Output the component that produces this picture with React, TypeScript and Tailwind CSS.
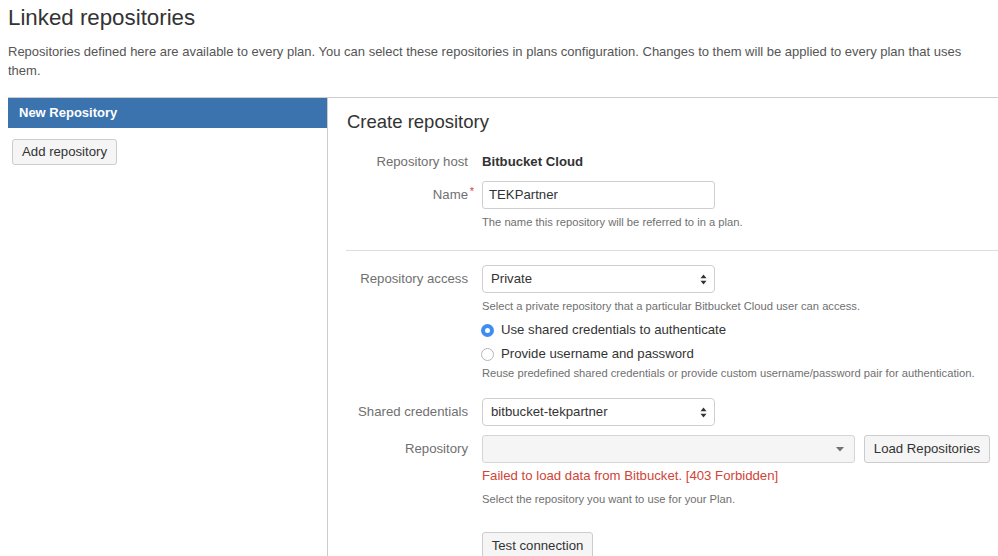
import React from 'react';

const font = { fontFamily: '"Liberation Sans", Arial, sans-serif' };

function Label({ children, required }: { children: React.ReactNode; required?: boolean }) {
  return (
    <div className="w-[122px] shrink-0 text-right text-[13.2px] text-[#707070]">
      <span className="relative">
        {children}
        {required && (
          <span className="absolute -right-[6px] -top-[4px] text-[11px] text-[#d04437]">*</span>
        )}
      </span>
    </div>
  );
}

function SelectArrows() {
  return (
    <svg width="7" height="11" viewBox="0 0 7 11" className="shrink-0">
      <path d="M3.5 0.5 L6.5 4.2 L0.5 4.2 Z" fill="#333" />
      <path d="M3.5 10.5 L6.5 6.8 L0.5 6.8 Z" fill="#333" />
    </svg>
  );
}

function NativeSelect({ value }: { value: string }) {
  return (
    <div className="w-[233px] h-[28px] bg-white border border-[#cfcfcf] rounded-[4px] flex items-center justify-between pl-[8px] pr-[7px] text-[13.2px] text-[#333]">
      <span>{value}</span>
      <SelectArrows />
    </div>
  );
}

function Radio({ checked, label }: { checked?: boolean; label: string }) {
  return (
    <div className="flex items-center h-[20px] text-[13.2px] text-[#333]">
      {checked ? (
        <span className="w-[13px] h-[13px] rounded-full bg-[#3d8ef0] flex items-center justify-center">
          <span className="w-[5px] h-[5px] rounded-full bg-white" />
        </span>
      ) : (
        <span className="w-[13px] h-[13px] rounded-full border border-[#b5b5b5] bg-white" />
      )}
      <span className="ml-[7px]">{label}</span>
    </div>
  );
}

export default function App() {
  return (
    <div className="w-[998px] h-[556px] overflow-hidden bg-white text-[#333] pl-[8px]" style={font}>
      {/* Header */}
      <h1 className="text-[22.3px] leading-[26px] pt-[5px] text-[#333]">Linked repositories</h1>
      <p className="mt-[11px] text-[13px] leading-[19px] text-[#555] pr-[10px]">
        Repositories defined here are available to every plan. You can select these repositories in plans configuration. Changes to them will be applied to every plan that uses them.
      </p>

      <div className="mt-[17px] border-t border-[#cccccc] flex h-[460px]">
        {/* Sidebar */}
        <div className="w-[320px] shrink-0 border-r border-[#cccccc]">
          <div className="h-[30px] bg-[#3b73af] flex items-center pl-[11px] text-[13px] font-bold text-white">
            New Repository
          </div>
          <button className="mt-[11px] ml-[4px] h-[26px] px-[9px] bg-[#f5f5f5] border border-[#cccccc] rounded-[3px] text-[13.2px] text-[#333]">
            Add repository
          </button>
        </div>

        {/* Form */}
        <div className="flex-1 pl-[18px] pt-[12px]">
          <h2 className="text-[18.5px] leading-[24px] pl-[1px] text-[#333]">Create repository</h2>

          <div className="mt-[18px] flex items-center h-[20px] gap-[14px]">
            <Label>Repository host</Label>
            <span className="text-[13.2px] font-bold text-[#333]">Bitbucket Cloud</span>
          </div>

          <div className="mt-[9px] flex items-center gap-[14px]">
            <Label required>Name</Label>
            <div className="w-[233px] h-[28px] bg-white border border-[#cfcfcf] rounded-[3px] flex items-center pl-[6px] text-[13.2px] text-[#333]">
              TEKPartner
            </div>
          </div>
          <div className="mt-[5px] ml-[136px] text-[11.2px] leading-[16px] text-[#707070]">
            The name this repository will be referred to in a plan.
          </div>

          <div className="mt-[20px] border-t border-[#dddddd]" />

          <div className="mt-[14px] flex items-center gap-[14px]">
            <Label>Repository access</Label>
            <NativeSelect value="Private" />
          </div>
          <div className="mt-[5px] ml-[136px] text-[11.2px] leading-[16px] text-[#707070]">
            Select a private repository that a particular Bitbucket Cloud user can access.
          </div>
          <div className="ml-[135px] mt-[6px] flex flex-col gap-[4px]">
            <Radio checked label="Use shared credentials to authenticate" />
            <Radio label="Provide username and password" />
          </div>
          <div className="mt-[1px] ml-[136px] text-[11.2px] leading-[16px] text-[#707070] whitespace-nowrap">
            Reuse predefined shared credentials or provide custom username/password pair for authentication.
          </div>

          <div className="mt-[17px] flex items-center gap-[14px]">
            <Label>Shared credentials</Label>
            <NativeSelect value="bitbucket-tekpartner" />
          </div>

          <div className="mt-[9px] flex items-center gap-[14px]">
            <Label>Repository</Label>
            <div className="w-[373px] h-[28px] bg-[#f5f5f5] border border-[#d5d5d5] rounded-[3px] flex items-center justify-end pr-[10px]">
              <svg width="8" height="5" viewBox="0 0 8 5">
                <path d="M0 0 L8 0 L4 4.5 Z" fill="#707070" />
              </svg>
            </div>
            <button className="-ml-[5px] h-[28px] w-[126px] bg-[#f5f5f5] border border-[#cccccc] rounded-[3px] text-[13.2px] text-[#333]">
              Load Repositories
            </button>
          </div>
          <div className="mt-[4px] ml-[136px] text-[13.2px] leading-[18px] text-[#d04437]">
            Failed to load data from Bitbucket. [403 Forbidden]
          </div>
          <div className="mt-[6px] ml-[136px] text-[11.2px] leading-[16px] text-[#707070]">
            Select the repository you want to use for your Plan.
          </div>

          <button className="mt-[25px] ml-[136px] h-[28px] w-[111px] bg-[#f5f5f5] border border-[#cccccc] rounded-[3px] text-[13.2px] text-[#333]">
            Test connection
          </button>
        </div>
      </div>
    </div>
  );
}
